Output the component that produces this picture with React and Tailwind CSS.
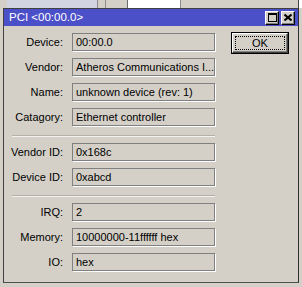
function Field({ label, value }) {
  return (
    <div className="flex h-[18px] items-center">
      <div className="w-[59px] text-right whitespace-nowrap leading-none">{label}</div>
      <div className="ml-[9px] flex h-[18px] w-[143px] items-center overflow-hidden whitespace-nowrap border border-[#808080] pl-[3px] leading-none shadow-[1px_1px_0_#ffffff]">
        {value}
      </div>
    </div>
  );
}

function Sep() {
  return <div className="ml-[8px] h-[2px] w-[203px] border-t border-b border-t-[#b4b0a8] border-b-[#f4f2ee]" />;
}

function TitleBtn({ children }) {
  return (
    <div className="flex h-[14px] w-[14px] items-center justify-center border border-t-white border-l-white border-r-black border-b-black bg-[#d4d0c8] shadow-[inset_-1px_-1px_0_#808080]">
      {children}
    </div>
  );
}

export default function App() {
  return (
    <div className="flex h-[287px] w-[302px] flex-col overflow-hidden bg-[#d4d0c8] font-['Liberation_Sans',Arial,sans-serif] text-[11px] text-black">
      <div className="flex h-[8px] shrink-0">
        <div className="w-[7px] bg-[#d4d0c8]" />
        <div className="w-[90px] bg-[#d2d4e2]" />
        <div className="w-[8px] border-l border-[#8c8c8c] bg-[#d4d0c8]" />
        <div className="w-[22px] border-l border-[#8c8c8c] bg-[#d4d0c8]" />
        <div className="w-[53px] border-l border-[#6c6c6c] bg-white" />
        <div className="w-[118px] border-l border-[#8c8c8c] bg-[#d4d0c8]" />
        <div className="flex-1 border-l border-[#404040] bg-white" />
      </div>
      <div className="ml-[3px] flex h-[275px] w-[296px] shrink-0 flex-col border border-[#404040] border-r-[#303030] border-b-[#505050] bg-[#d4d0c8]">
        <div className="flex h-[17px] shrink-0 items-center justify-between bg-[#4c50c8] pl-[5px] pr-[3px] text-white">
          <span className="text-[11.5px] leading-none">PCI &lt;00:00.0&gt;</span>
          <div className="flex gap-[2px]">
            <TitleBtn>
              <div className="h-[9px] w-[9px] border border-t-2 border-black" />
            </TitleBtn>
            <TitleBtn>
              <svg width="8" height="7" viewBox="0 0 8 7">
                <path d="M0.5 0.5 L7.5 6.5 M7.5 0.5 L0.5 6.5" stroke="#000" strokeWidth="2" />
              </svg>
            </TitleBtn>
          </div>
        </div>
        <div className="flex">
          <div className="flex flex-col pt-[7px]">
            <div className="flex flex-col gap-[7px]">
              <Field label="Device:" value="00:00.0" />
              <Field label="Vendor:" value="Atheros Communications I..." />
              <Field label="Name:" value="unknown device (rev: 1)" />
              <Field label="Catagory:" value="Ethernet controller" />
            </div>
            <div className="mt-[9px] mb-[6px]">
              <Sep />
            </div>
            <div className="flex flex-col gap-[7px]">
              <Field label="Vendor ID:" value="0x168c" />
              <Field label="Device ID:" value="0xabcd" />
            </div>
            <div className="mt-[9px] mb-[6px]">
              <Sep />
            </div>
            <div className="flex flex-col gap-[7px]">
              <Field label="IRQ:" value="2" />
              <Field label="Memory:" value="10000000-11ffffff hex" />
              <Field label="IO:" value="hex" />
            </div>
          </div>
          <div className="ml-[16px] pt-[6px]">
            <div className="h-[22px] w-[58px] border border-black">
              <div className="flex h-full w-full items-center justify-center border border-t-white border-l-white border-r-[#404040] border-b-[#404040] shadow-[inset_-1px_-1px_0_#808080]">
                <div className="flex h-[14px] w-[50px] items-center justify-center border border-dotted border-black leading-none">
                  OK
                </div>
              </div>
            </div>
          </div>
        </div>
      </div>
    </div>
  );
}
